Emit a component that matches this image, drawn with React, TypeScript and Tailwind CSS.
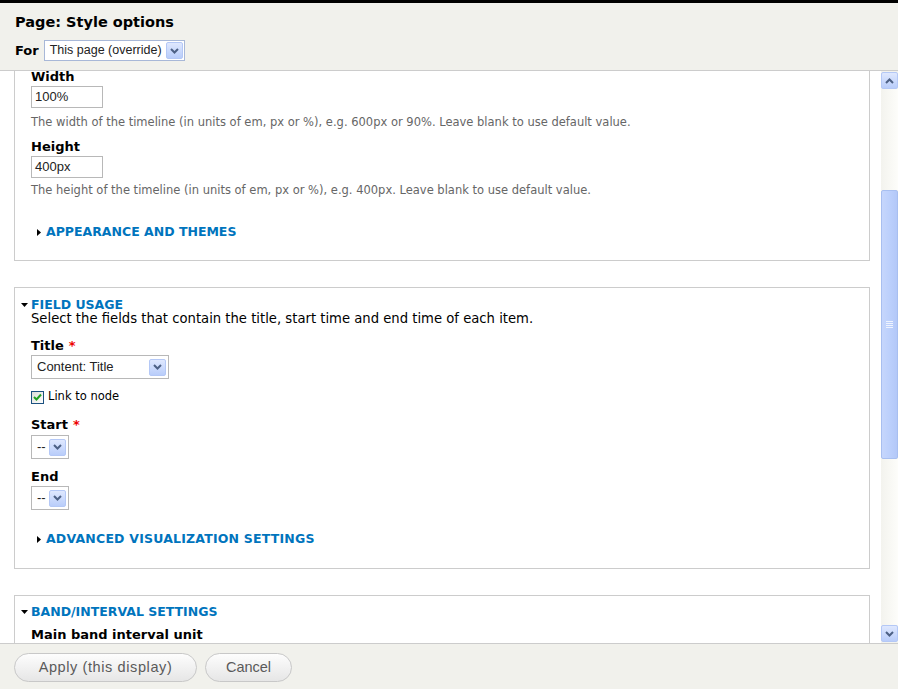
import React from 'react';

const font = "font-['DejaVu_Sans',Verdana,sans-serif]";

function Chevron({ up = false }: { up?: boolean }) {
  return (
    <svg width="9" height="6" viewBox="0 0 9 6" className={up ? 'rotate-180' : ''}>
      <path d="M1 1 L4.5 4.5 L8 1" fill="none" stroke="#4d6185" strokeWidth="2" />
    </svg>
  );
}

function DropButton() {
  return (
    <span className="flex h-[17px] w-[17px] shrink-0 items-center justify-center rounded-[2px] border border-[#b4c8f6] bg-gradient-to-b from-[#dfe8fe] to-[#b9cdfa]">
      <Chevron />
    </span>
  );
}

function Select({ value, width }: { value: string; width: string }) {
  return (
    <div
      className={`flex h-[24px] items-center justify-between whitespace-nowrap border border-[#b8b8b8] bg-white pl-[5px] pr-[2px] font-['Liberation_Sans',Arial,sans-serif] text-[13px] text-[#222] ${width}`}
    >
      <span>{value}</span>
      <DropButton />
    </div>
  );
}

function TextInput({ value, className = '' }: { value: string; className?: string }) {
  return (
    <div className={`flex h-[22px] w-[72px] items-center border border-[#b8b8b8] bg-white px-[3px] font-['Liberation_Sans',Arial,sans-serif] text-[13px] text-[#222] ${className}`}>
      {value}
    </div>
  );
}

function Label({ children, required = false, className = '' }) {
  return (
    <div className={`h-[18px] text-[13px] font-bold leading-[18px] text-black ${className}`}>
      {children}
      {required && <span className="ml-[5px] text-[#e00]">*</span>}
    </div>
  );
}

function Desc({ children, className = '' }) {
  return <div className={`h-[16px] text-[11.5px] leading-[16px] text-[#666] ${className}`}>{children}</div>;
}

function Collapsed({ children, className = '' }) {
  return (
    <div className={`flex h-[18px] items-center gap-[5px] pl-[6px] text-[12.5px] font-bold uppercase leading-[18px] text-[#0074bd] ${className}`}>
      <svg width="4" height="7" viewBox="0 0 4 7">
        <path d="M0 0 L4 3.5 L0 7 Z" fill="#000" />
      </svg>
      {children}
    </div>
  );
}

function Legend({ children }) {
  return (
    <div className="flex h-[14px] items-center gap-[3px] text-[12.5px] font-bold uppercase leading-[14px] text-[#0074bd]">
      <svg width="7" height="4" viewBox="0 0 7 4">
        <path d="M0 0 L7 0 L3.5 4 Z" fill="#000" />
      </svg>
      {children}
    </div>
  );
}

function Checkbox() {
  return (
    <span className="flex h-[13px] w-[13px] items-center justify-center border border-[#1c5180] bg-gradient-to-br from-[#dcdcd7] to-white">
      <svg width="9" height="9" viewBox="0 0 9 9">
        <path d="M1 4 L3.5 6.5 L8 1.5" fill="none" stroke="#21a121" strokeWidth="2" />
      </svg>
    </span>
  );
}

function Scrollbar() {
  return (
    <div className="flex w-[17px] flex-col bg-[#f3f3ee] pt-[1px]">
      <div className="flex h-[17px] items-center justify-center rounded-[2px] border border-[#b4c8f6] bg-gradient-to-b from-[#dfe8fe] to-[#b9cdfa]">
        <Chevron up />
      </div>
      <div className="h-[101px] bg-gradient-to-r from-[#f3f3ee] to-[#fdfdfa]" />
      <div className="flex h-[269px] items-center justify-center rounded-[2px] border border-[#a8bff0] bg-gradient-to-r from-[#c6d6fc] via-[#bcd0fc] to-[#b3c8f8]">
        <div className="flex w-[7px] flex-col gap-[1px]">
          <span className="h-[1px] bg-[#eef3fe]" />
          <span className="h-[1px] bg-[#eef3fe]" />
          <span className="h-[1px] bg-[#eef3fe]" />
          <span className="h-[1px] bg-[#eef3fe]" />
        </div>
      </div>
      <div className="flex-1 bg-gradient-to-r from-[#f3f3ee] to-[#fdfdfa]" />
      <div className="mb-[1px] flex h-[17px] items-center justify-center rounded-[2px] border border-[#b4c8f6] bg-gradient-to-b from-[#dfe8fe] to-[#b9cdfa]">
        <Chevron />
      </div>
    </div>
  );
}

function Button({ children, className }: { children: React.ReactNode; className: string }) {
  return (
    <button
      type="button"
      className={`h-[29px] rounded-full border border-[#c8c8c8] bg-gradient-to-b from-[#fdfdfd] to-[#e6e6e6] font-['Liberation_Sans',Arial,sans-serif] text-[14.5px] text-[#5a5a5a] ${className}`}
    >
      {children}
    </button>
  );
}

export default function App() {
  return (
    <div className={`flex h-[689px] w-[898px] flex-col overflow-hidden bg-white ${font}`}>
      <div className="h-[3px] bg-black" />
      <header className="border-b border-[#cccccc] bg-[#f1f1ec] px-[15px] pb-[9px] pt-[9px]">
        <h1 className="h-[20px] text-[14.5px] font-bold leading-[20px] text-black">Page: Style options</h1>
        <div className="mt-[8px] flex h-[21px] items-center gap-[5px]">
          <span className="text-[13px] font-bold text-black">For</span>
          <div className="flex h-[21px] w-[141px] items-center justify-between whitespace-nowrap border border-[#a8b8d8] bg-white pl-[5px] pr-[1px] font-['Liberation_Sans',Arial,sans-serif] text-[12.5px] text-[#222]">
            <span>This page (override)</span>
            <DropButton />
          </div>
        </div>
      </header>

      <div className="flex min-h-0 flex-1">
        <div className="min-w-0 flex-1 overflow-hidden pl-[14px] pr-[11px]">
          {/* panel scrolled partly out of view */}
          <div className="border-x border-b border-[#cccccc] pb-[19px] pl-[16px]">
            <div className="h-[11px] pt-[1px] text-[13px] font-bold leading-[10px] text-black">Width</div>
            <TextInput value="100%" className="mt-[4px]" />
            <Desc className="mt-[6px]">
              The width of the timeline (in units of em, px or %), e.g. 600px or 90%. Leave blank to use default value.
            </Desc>
            <Label className="mt-[8px]">Height</Label>
            <TextInput value="400px" />
            <Desc className="mt-[4px]">
              The height of the timeline (in units of em, px or %), e.g. 400px. Leave blank to use default value.
            </Desc>
            <Collapsed className="mt-[25px]">Appearance and themes</Collapsed>
          </div>

          <div className="mt-[26px] border border-[#cccccc] pb-[20px] pl-[6px] pt-[10px]">
            <Legend>Field usage</Legend>
            <div className="pl-[10px]">
              <div className="h-[14px] text-[13.2px] leading-[14px] text-black">
                Select the fields that contain the title, start time and end time of each item.
              </div>
              <Label required className="mt-[11px]">
                Title
              </Label>
              <Select value="Content: Title" width="w-[138px]" />
              <div className="mt-[10px] flex h-[16px] items-center gap-[4px] text-[11.5px] text-black">
                <Checkbox />
                Link to node
              </div>
              <Label required className="mt-[11px]">
                Start
              </Label>
              <div className="mt-[1px]">
                <Select value="--" width="w-[38px]" />
              </div>
              <Label className="mt-[9px]">End</Label>
              <Select value="--" width="w-[38px]" />
              <Collapsed className="-ml-[10px] mt-[20px] pl-[16px] tracking-[0.2px]">Advanced visualization settings</Collapsed>
            </div>
          </div>

          <div className="mt-[26px] border border-[#cccccc] pl-[6px] pt-[9px]">
            <Legend>Band/interval settings</Legend>
            <Label className="ml-[10px] mt-[7px]">Main band interval unit</Label>
            <div className="h-[40px]" />
          </div>
        </div>
        <Scrollbar />
      </div>

      <footer className="flex h-[46px] gap-[8px] border-t border-[#cccccc] bg-[#f1f1ec] pl-[14px] pt-[9px]">
        <Button className="w-[183px] tracking-[0.6px]">Apply (this display)</Button>
        <Button className="w-[87px]">Cancel</Button>
      </footer>
    </div>
  );
}
